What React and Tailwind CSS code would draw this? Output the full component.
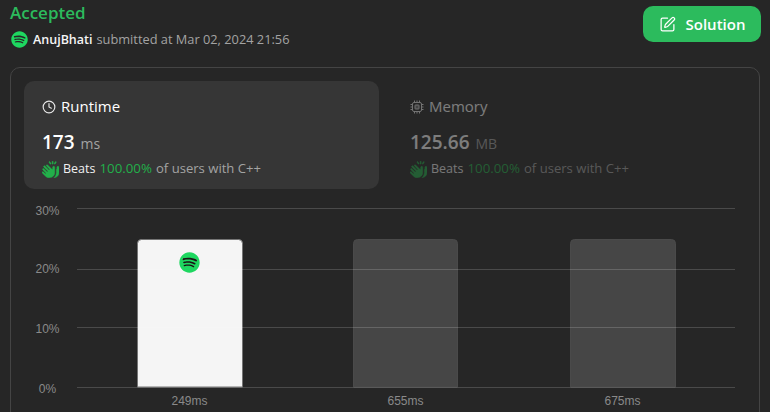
import React from 'react';
import { Clock, SquarePen } from 'lucide-react';
import { FaSpotify } from 'react-icons/fa';
import { FaHandsClapping } from 'react-icons/fa6';

const ticks = [
  { label: '30%', y: 208.5, textY: 215 },
  { label: '20%', y: 269.5, textY: 272.5 },
  { label: '10%', y: 327.5, textY: 332.5 },
  { label: '0%', y: 387.5, textY: 393 },
];

const bars = [
  { x: 137.5, w: 105, label: '249ms', active: true },
  { x: 353.5, w: 104, label: '655ms' },
  { x: 570.5, w: 105, label: '675ms' },
];

const barPath = (x, w) => `M${x} 387V243.5a4 4 0 0 1 4-4h${w - 8}a4 4 0 0 1 4 4V387Z`;

const ChipIcon = ({ size, className }) => (
  <svg width={size} height={size} viewBox="0 0 14 14" fill="none" stroke="currentColor" className={className}>
    <rect x="2.5" y="2.5" width="9" height="9" rx="1.5" />
    <rect x="5" y="5" width="4" height="4" rx="0.5" fill="currentColor" fillOpacity="0.4" />
    <path d="M4.5 0.5v2M7 0.5v2M9.5 0.5v2M4.5 11.5v2M7 11.5v2M9.5 11.5v2M0.5 4.5h2M0.5 7h2M0.5 9.5h2M11.5 4.5h2M11.5 7h2M11.5 9.5h2" />
  </svg>
);

const StatTile = ({ icon: Icon, title, value, unit, active }) => (
  <div className={`w-[355px] h-[108px] rounded-[10px] pl-[18px] pt-[15px] ${active ? 'bg-[#363636]' : 'opacity-40'}`}>
    <div className="flex items-center gap-[5px] h-[21px] text-[15px] text-white">
      <Icon size={14} strokeWidth={2} className="text-[#e6e6e6]" />
      <span>{title}</span>
    </div>
    <div className="flex items-baseline gap-[6px] mt-[13px] h-[24px] leading-[24px]">
      <span className="text-[19px] font-semibold text-white">{value}</span>
      <span className="text-[14px] text-[#a3a3a3]">{unit}</span>
    </div>
    <div className="flex items-center mt-[5px] h-[20px] text-[13px] text-[#a3a3a3]">
      <FaHandsClapping className="text-[#22b04a] stroke-[#22b04a] stroke-[12px] text-[17px] mr-[4px]" />
      <span className="text-[#f0f0f0] text-[12.5px]">Beats</span>
      <span className="text-[#22b04a] text-[13.3px] font-medium ml-[4px]">100.00%</span>
      <span className="ml-[4px] text-[13.1px]">of users with C++</span>
    </div>
  </div>
);

const Chart = () => (
  <svg width="748" height="212" viewBox="0 0 748 212" className="block">
    <g transform="translate(-11 -200)">
      {bars.map((bar) => (
        <path
          key={bar.label}
          d={barPath(bar.x, bar.w)}
          fill={bar.active ? '#f5f5f5' : '#464646'}
          stroke={bar.active ? '#757575' : '#4a4a4a'}
        />
      ))}
      {ticks.map((tick) => (
        <g key={tick.label}>
          <line
            x1="77"
            x2="735"
            y1={tick.y}
            y2={tick.y}
            stroke="#fff"
            strokeOpacity="0.17"
          />
          <text
            x="47.5"
            y={tick.textY}
            textAnchor="middle"
            fontSize="12"
            fontFamily="Liberation Sans, Arial, sans-serif"
            fill="#8a8a8a"
          >
            {tick.label}
          </text>
        </g>
      ))}
      {bars.map((bar) => (
        <text
          key={bar.label}
          x={bar.x + 52}
          y="405"
          textAnchor="middle"
          fontSize="12"
          fontFamily="Liberation Sans, Arial, sans-serif"
          fill="#8a8a8a"
        >
          {bar.label}
        </text>
      ))}
      <circle cx="189.5" cy="262.5" r="8" fill="#191414" />
      <foreignObject x="179" y="252" width="21" height="21">
        <FaSpotify size={21} className="text-[#1ed760]" />
      </foreignObject>
    </g>
  </svg>
);

const App = () => {
  return (
    <div className="w-[770px] h-[412px] overflow-hidden bg-[#262626] font-['Open_Sans','Noto_Sans',sans-serif]">
      <div className="flex justify-between pl-[10px] pr-[9px] h-[67px]">
        <div>
          <div className="text-[#2cbb5d] text-[17px] font-semibold leading-[24px] mt-[1px]">Accepted</div>
          <div className="flex items-center mt-[5px] h-[20px] text-[12.8px] text-[#a3a3a3]">
            <FaSpotify size={17} className="text-[#1ed760] mr-[5px] ml-[1px] -mt-[2px]" />
            <span className="text-[#f5f5f5] text-[12.5px] font-semibold mr-[4px]">AnujBhati</span>
            <span>submitted at Mar 02, 2024 21:56</span>
          </div>
        </div>
        <button className="flex items-center justify-center gap-[10px] mt-[6px] w-[118px] h-[36px] rounded-[10px] bg-[#2cbb5d] text-white text-[15px] font-semibold">
          <SquarePen size={17} strokeWidth={1.75} />
          Solution
        </button>
      </div>

      <div className="border border-[#444] rounded-[10px] mx-[10px] h-[360px] pl-[13px] pt-[13px]">
        <div className="flex gap-[13px]">
          <StatTile icon={Clock} title="Runtime" value="173" unit="ms" active />
          <StatTile icon={ChipIcon} title="Memory" value="125.66" unit="MB" />
        </div>
        <div className="mt-[11px] -ml-[13px]">
          <Chart />
        </div>
      </div>
    </div>
  );
};

export default App;
